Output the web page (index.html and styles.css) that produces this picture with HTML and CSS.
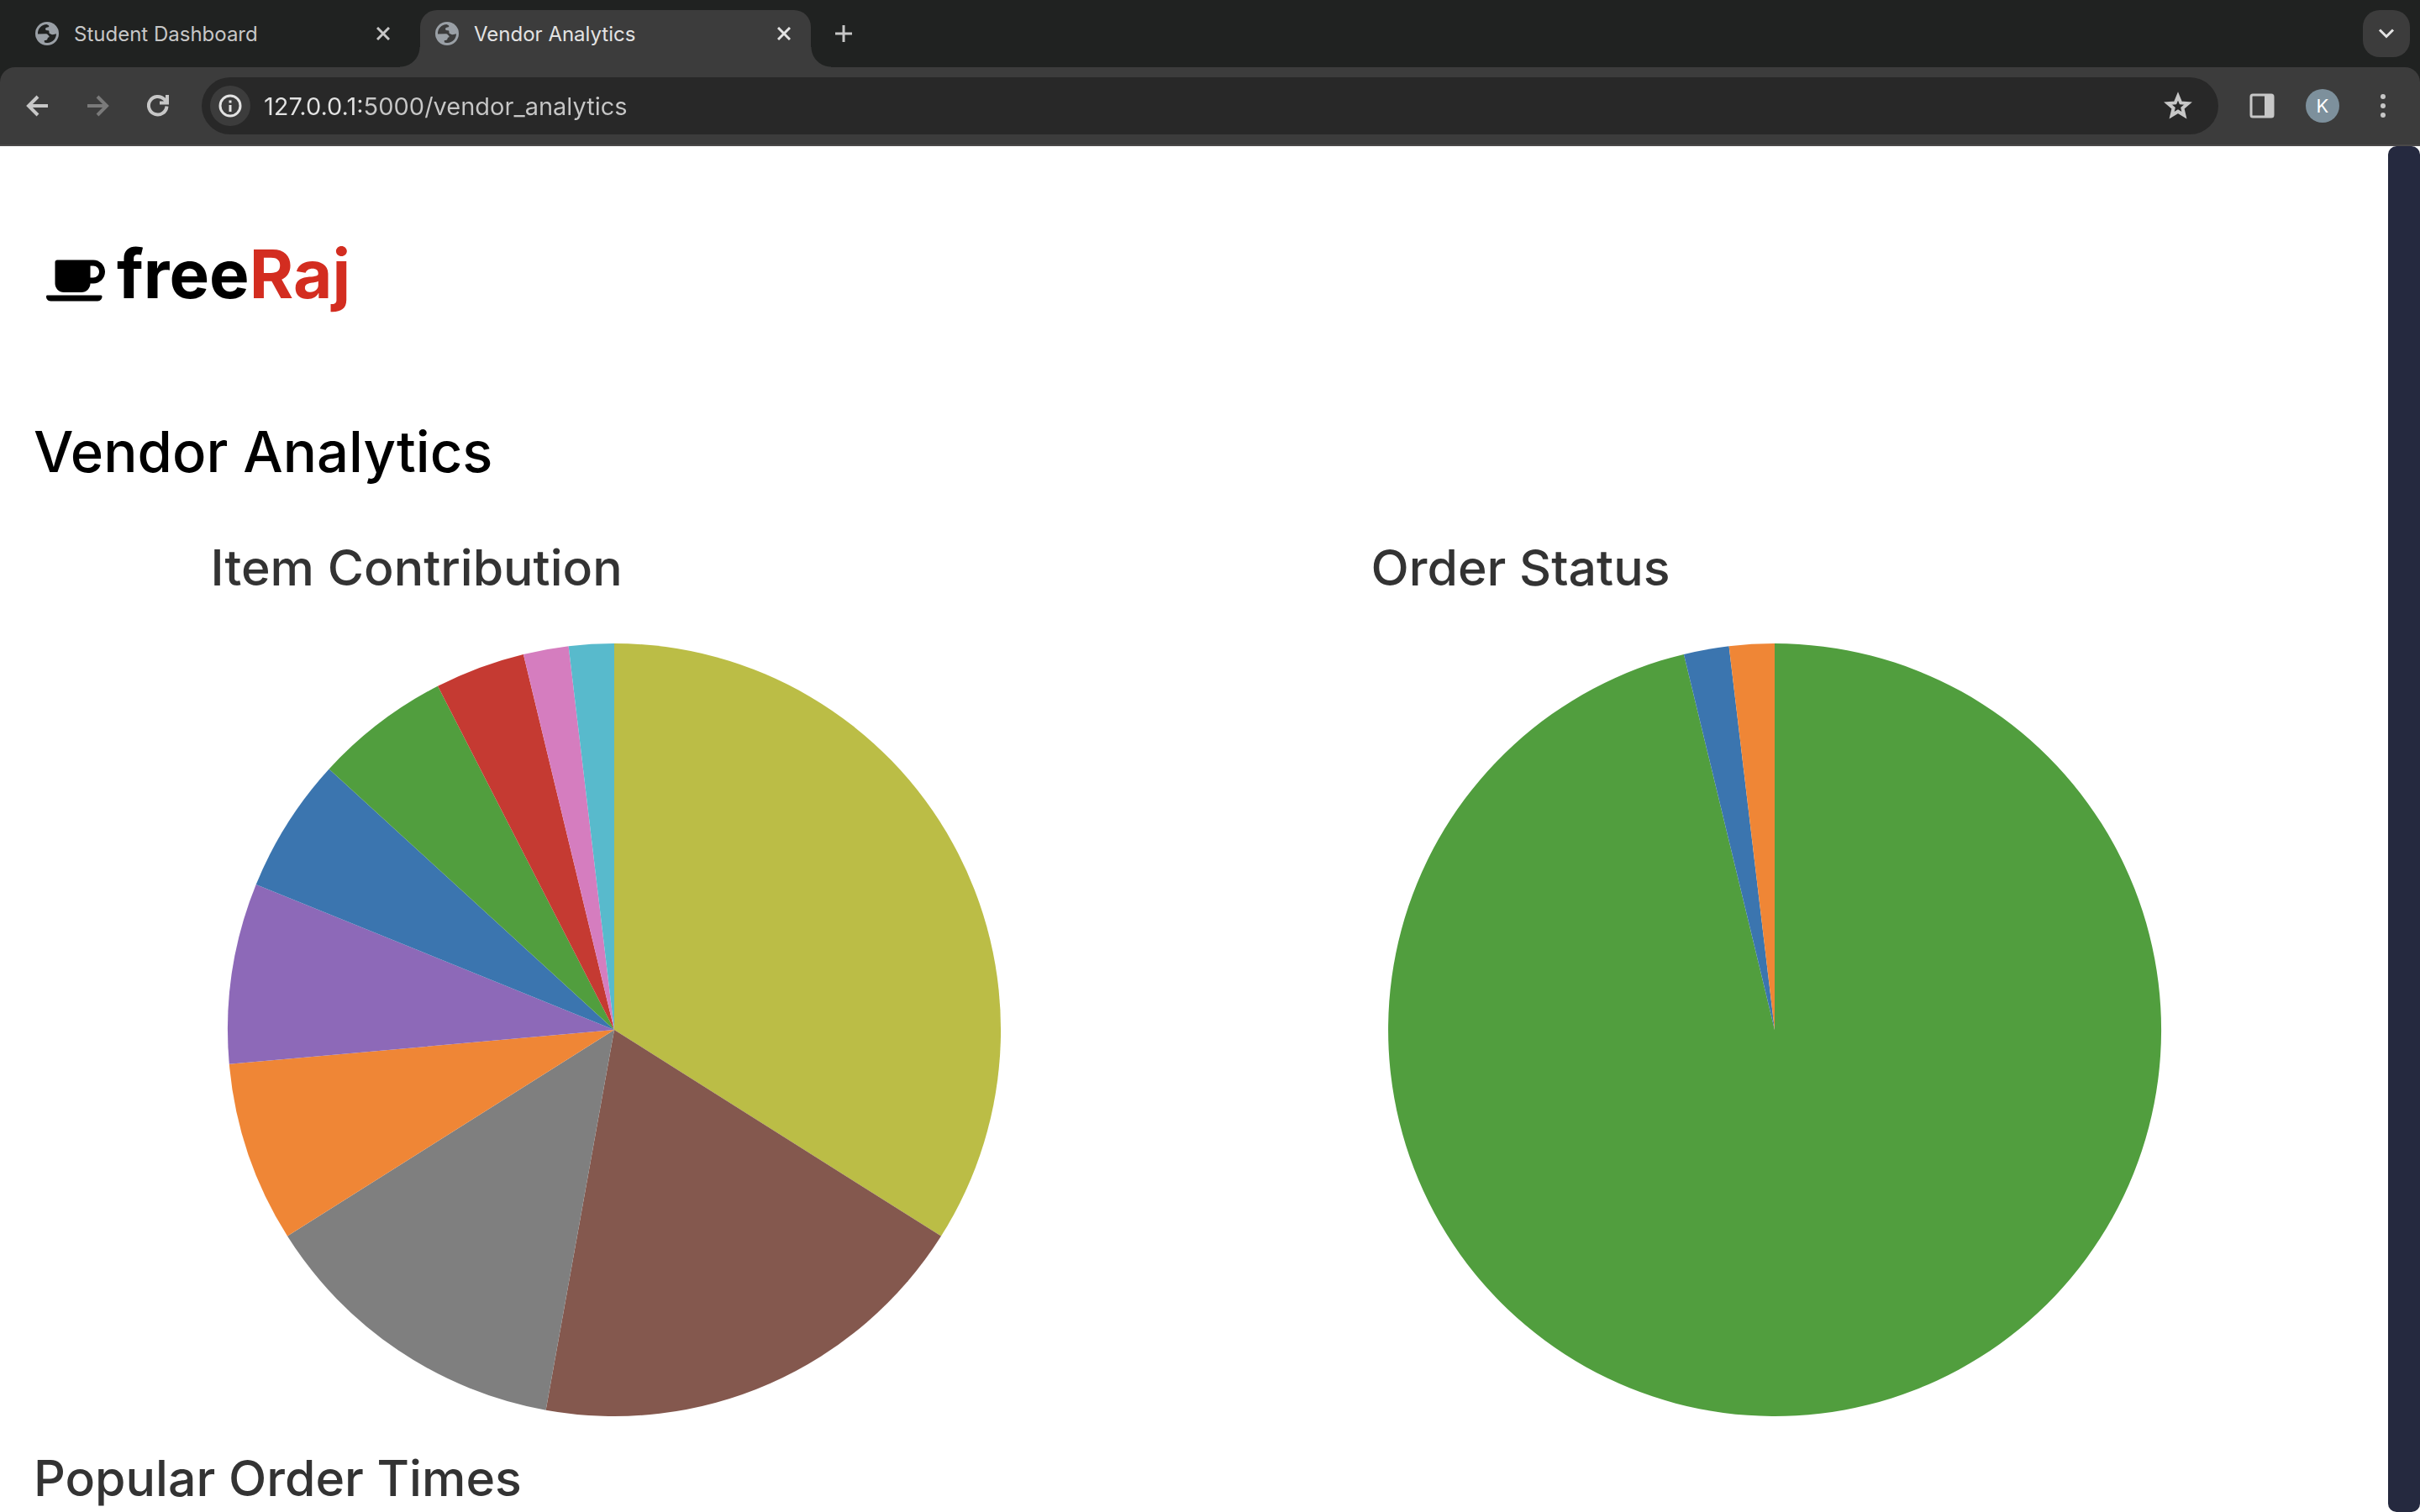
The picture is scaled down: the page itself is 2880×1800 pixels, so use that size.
FILE: index.html
```html
<!DOCTYPE html>
<html lang="en">
<head>
<meta charset="utf-8">
<title>Vendor Analytics</title>
<link rel="stylesheet" href="styles.css">
</head>
<body>
<svg class="defs" aria-hidden="true">
  <symbol id="globe" viewBox="0 0 28 28">
    <circle cx="14" cy="14" r="14" fill="#9aa0a6"/>
    <path class="globe-sea" d="M3 14.500C2.600 8 7.500 3.200 13.500 3L15.500 4C17 5 16.500 6.300 14.500 6.500Q12 6.600 12 8.500Q12 10.300 14 10.300H15.500Q16.500 10.300 16.500 12V13Q16.500 14.300 18 14.300Q19.500 15.500 22 15L25 14.200C25 20 20.500 24.800 14.500 25C12.500 25 11 24.700 10.800 24.200V22Q14.500 22 14.500 20Q14.500 18.300 16.500 18.300Q17.300 17 15 15.500Q14 13.700 12 14.300Z"/>
  </symbol>
  <symbol id="close" viewBox="0 0 16 16"><path d="M1 1L15 15M15 1L1 15"/></symbol>
</svg>

<header class="browser">
  <nav class="tabs" aria-label="Tabs">
    <div class="tab">
      <svg class="favicon"><use href="#globe"/></svg>
      <button class="tab-title">Student Dashboard</button>
      <button class="tab-close" aria-label="Close Student Dashboard"><svg class="stroke"><use href="#close"/></svg></button>
    </div>
    <div class="tab tab-active">
      <svg class="favicon"><use href="#globe"/></svg>
      <button class="tab-title">Vendor Analytics</button>
      <button class="tab-close" aria-label="Close Vendor Analytics"><svg class="stroke"><use href="#close"/></svg></button>
    </div>
    <button class="new-tab" aria-label="New tab"><svg class="stroke" viewBox="0 0 20 20"><path d="M10 0V20M0 10H20"/></svg></button>
    <button class="tab-search" aria-label="Search tabs"><svg class="stroke" viewBox="0 0 18 12"><path d="M1 1.500L9 9.500L17 1.500"/></svg></button>
  </nav>
  <div class="toolbar">
    <button class="tool" aria-label="Back"><svg class="stroke" viewBox="0 0 26 26"><path d="M26 13H3M14 2L3 13L14 24"/></svg></button>
    <button class="tool tool-off" aria-label="Forward"><svg class="stroke" viewBox="0 0 26 26"><path d="M1 13H24M13 2L24 13L13 24"/></svg></button>
    <button class="tool" aria-label="Reload"><svg class="stroke" viewBox="0 0 26 26"><path d="M23.500 13.500A10.800 10.800 0 1 1 20.500 5.200L24 9M24 0V9.500H15"/></svg></button>
    <form class="omnibox">
      <button type="button" class="site-info" aria-label="Site information"><svg class="stroke" viewBox="0 0 28 28"><circle cx="14" cy="14" r="12"/><path d="M14 13V21M14 7.500V10.500"/></svg></button>
      <input class="url" type="text" aria-label="Address" value="127.0.0.1:5000/vendor_analytics">
      <button type="button" class="star" aria-label="Bookmark"><svg class="stroke" viewBox="0 0 34 32"><path d="M17 4.500L20.300 12.400L29 13.100L22.400 18.800L24.400 27.200L17 22.700L9.600 27.200L11.600 18.800L5 13.100L13.700 12.400Z"/></svg></button>
    </form>
    <button class="panel" aria-label="Side panel"><svg viewBox="0 0 30 30"><rect x="2" y="2" width="26" height="26" rx="2" fill="none" stroke="#c7c7c7" stroke-width="3"/><path d="M18 2H28V28H18Z" fill="#c7c7c7"/></svg></button>
    <button class="avatar" aria-label="Profile">K</button>
    <button class="menu" aria-label="Menu"><svg viewBox="0 0 6 28"><circle cx="3" cy="3" r="3"/><circle cx="3" cy="14" r="3"/><circle cx="3" cy="25" r="3"/></svg></button>
  </div>
</header>

<div class="viewport">
  <main class="page">
    <a class="logo" href="#">
      <svg class="cup" viewBox="0 0 640 512"><path d="M192 384h192c53 0 96-43 96-96h32c70.600 0 128-57.400 128-128S582.600 32 512 32H120c-13.300 0-24 10.700-24 24v232c0 53 43 96 96 96zM512 96c35.300 0 64 28.700 64 64s-28.700 64-64 64h-32V96h32zm47.700 384H48.300c-47.600 0-61-64-36-64h583.300c25 0 11.800 64-35.900 64z"/></svg>
      <span class="wordmark">free<span class="accent">Raj</span></span>
    </a>
    <h1>Vendor Analytics</h1>
    <div class="charts">
      <section class="chart">
        <h2>Item Contribution</h2>
        <svg class="pie" viewBox="-480 -480 960 960" role="img" aria-label="Item contribution pie chart">
          <path fill="#bbbd46" d="M0 0L0 -460A460 460 0 0 1 389 245.600Z"/>
          <path fill="#84584e" d="M0 0L389 245.600A460 460 0 0 1 -81.400 452.700Z"/>
          <path fill="#7f7f7f" d="M0 0L-81.400 452.700A460 460 0 0 1 -389 245.600Z"/>
          <path fill="#ef8636" d="M0 0L-389 245.600A460 460 0 0 1 -458.200 40.800Z"/>
          <path fill="#8d69b8" d="M0 0L-458.200 40.800A460 460 0 0 1 -426.300 -172.900Z"/>
          <path fill="#3b75af" d="M0 0L-426.300 -172.900A460 460 0 0 1 -339.400 -310.500Z"/>
          <path fill="#519e3e" d="M0 0L-339.400 -310.500A460 460 0 0 1 -210 -409.200Z"/>
          <path fill="#c53a32" d="M0 0L-210 -409.200A460 460 0 0 1 -108.100 -447.100Z"/>
          <path fill="#d57dbf" d="M0 0L-108.100 -447.100A460 460 0 0 1 -54.400 -456.800Z"/>
          <path fill="#58bacc" d="M0 0L-54.400 -456.800A460 460 0 0 1 0 -460Z"/>
        </svg>
      </section>
      <section class="chart">
        <h2>Order Status</h2>
        <svg class="pie" viewBox="-480 -480 960 960" role="img" aria-label="Order status pie chart">
          <path fill="#519e3e" d="M0 0L0 -460A460 460 0 1 1 -108.100 -447.100Z"/>
          <path fill="#3b75af" d="M0 0L-108.100 -447.100A460 460 0 0 1 -54.400 -456.800Z"/>
          <path fill="#ef8636" d="M0 0L-54.400 -456.800A460 460 0 0 1 0 -460Z"/>
        </svg>
      </section>
    </div>
    <h2 class="times">Popular Order Times</h2>
  </main>
  <div class="scrollbar"></div>
</div>
</body>
</html>
```

FILE: styles.css
```css
* { box-sizing: border-box; }
body {
  margin: 0;
  height: 100vh;
  display: flex;
  flex-direction: column;
  overflow: hidden;
  background: #fff;
  font-family: Inter, "Liberation Sans", sans-serif;
}
button {
  margin: 0;
  padding: 0;
  border: 0;
  background: none;
  color: inherit;
  font: inherit;
  display: grid;
  place-items: center;
}
svg { display: block; }
.defs { display: none; }
.stroke { fill: none; stroke: currentColor; stroke-width: 4px; overflow: visible; }

/* Browser tabs */
.browser { flex: none; background: #202221; color: #c7c7c7; }
.tabs { display: flex; height: 80px; padding: 12px 12px 0 0; }
.tab {
  --sea: #202221;
  display: flex;
  align-items: center;
  width: 465px;
  height: 68px;
  padding: 0 24px 12px 18px;
  font-size: 24px;
  color: #c7c7c7;
}
.tab:first-child { width: 500px; padding-left: 42px; padding-right: 36px; }
.tab-active {
  --sea: #3c3c3c;
  position: relative;
  background: #3c3c3c;
  border-radius: 20px 20px 0 0;
  color: #e3e3e3;
}
.tab-active::before,
.tab-active::after {
  content: "";
  position: absolute;
  bottom: 0;
  width: 24px;
  height: 24px;
}
.tab-active::before { right: 100%; background: radial-gradient(circle at 0 0, #202221 23px, #3c3c3c 24px); }
.tab-active::after { left: 100%; background: radial-gradient(circle at 100% 0, #202221 23px, #3c3c3c 24px); }
.favicon { width: 28px; height: 28px; margin-right: 18px; }
.globe-sea { fill: var(--sea); }
.tab-title { margin-right: auto; }
.tab-close { width: 16px; height: 16px; }
.tab-close svg { width: 16px; height: 16px; stroke-width: 3px; }
.new-tab { width: 20px; height: 56px; margin-left: 29px; }
.new-tab svg { width: 20px; height: 20px; stroke-width: 3px; }
.tab-search {
  width: 56px;
  height: 56px;
  margin-left: auto;
  border-radius: 20px;
  background: #3c3c3c;
  color: #e3e3e3;
}
.tab-search svg { width: 18px; height: 12px; stroke-width: 3px; }

/* Toolbar */
.toolbar {
  display: flex;
  align-items: center;
  height: 94px;
  padding: 0 41px 0 8px;
  border-bottom: 2px solid #4a4848;
  border-radius: 18px 18px 0 0;
  background: #3c3c3c;
}
.tool { width: 72px; height: 72px; }
.tool svg { width: 26px; height: 26px; stroke-width: 4px; }
.tool-off { color: #7a7a7a; }
.omnibox {
  flex: 1;
  display: flex;
  align-items: center;
  height: 68px;
  margin: 0 0 0 16px;
  padding: 0 31px 0 10px;
  border-radius: 34px;
  background: #282828;
}
.site-info {
  width: 48px;
  height: 48px;
  border-radius: 50%;
  background: #3c3c3c;
  color: #e3e3e3;
}
.site-info svg { width: 28px; height: 28px; stroke-width: 3px; }
.url {
  flex: 1;
  height: 48px;
  margin-left: 16px;
  padding: 0;
  border: 0;
  outline: 0;
  color: transparent;
  background: linear-gradient(to right, #e3e3e3 120px, #c7c7c7 120px);
  background-clip: text;
  -webkit-background-clip: text;
  font: inherit;
  font-size: 29px;
}
.star svg { width: 34px; height: 32px; stroke-width: 4px; }
.panel { margin-left: 37px; }
.panel svg { width: 30px; height: 30px; }
.avatar {
  width: 40px;
  height: 40px;
  margin-left: 37px;
  border-radius: 50%;
  background: #7d909c;
  color: #fff;
  font-size: 22px;
}
.menu { margin-left: 49px; }
.menu svg { width: 6px; height: 28px; fill: #c7c7c7; }

/* Page */
.viewport { flex: 1; min-height: 0; display: flex; }
.page { flex: 1; min-width: 0; padding: 100px 40px 0; overflow: hidden; }
.scrollbar { flex: none; width: 38px; border-radius: 10px; background: #25293f; }
.logo {
  display: flex;
  align-items: flex-start;
  gap: 14px;
  width: max-content;
  height: 120px;
  padding-left: 15px;
  color: #000;
  text-decoration: none;
}
.cup { width: 70px; height: 56px; margin-top: 32px; }
.wordmark { font-size: 80px; font-weight: 700; line-height: 104px; }
.accent { color: #d32d20; }
h1, h2 { margin: 0; font-weight: 500; }
h1 { margin-top: 96px; font-size: 67px; line-height: 96px; color: #000; }
h2 { font-size: 59px; line-height: 84px; color: #333; }
.charts { display: flex; justify-content: space-around; margin-top: 48px; }
.chart { width: 960px; }
.pie { width: 100%; margin-top: 28px; }
.times { margin-top: 12px; }
```
